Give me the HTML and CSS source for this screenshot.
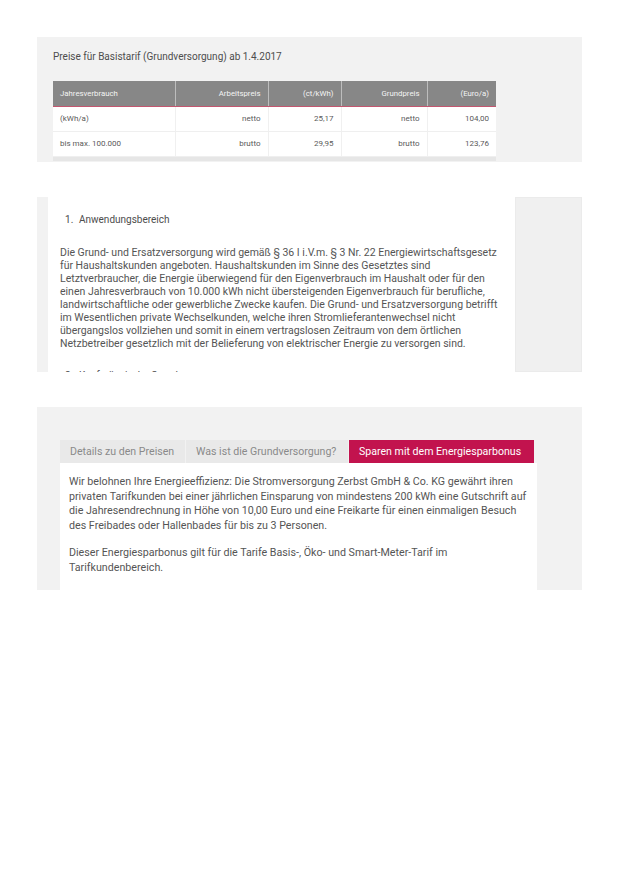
FILE: index.html
```html
<!DOCTYPE html>
<html lang="de">
<head>
<meta charset="utf-8">
<link rel="stylesheet" href="styles.css">
</head>
<body>
<div class="page">
  <section class="panel prices">
    <h2 class="title">Preise für Basistarif (Grundversorgung) ab 1.4.2017</h2>
    <div class="table-wrap">
      <table class="ptable">
        <colgroup>
          <col class="c1"><col class="c2"><col class="c3"><col class="c4"><col class="c5">
        </colgroup>
        <thead>
          <tr><th class="left">Jahresverbrauch</th><th>Arbeitspreis</th><th>(ct/kWh)</th><th>Grundpreis</th><th>(Euro/a)</th></tr>
        </thead>
        <tbody>
          <tr><td class="left">(kWh/a)</td><td>netto</td><td>25,17</td><td>netto</td><td>104,00</td></tr>
          <tr><td class="left">bis max. 100.000</td><td>brutto</td><td>29,95</td><td>brutto</td><td>123,76</td></tr>
        </tbody>
      </table>
    </div>
  </section>

  <section class="panel terms">
    <div class="terms-box">
      <ol class="terms-list">
        <li class="terms-item">
          <h3 class="terms-head">Anwendungsbereich</h3>
          <p class="terms-text">Die Grund- und Ersatzversorgung wird gemäß § 36 I i.V.m. § 3 Nr. 22 Energiewirtschaftsgesetz für Haushaltskunden angeboten. Haushaltskunden im Sinne des Gesetztes sind Letztverbraucher, die Energie überwiegend für den Eigenverbrauch im Haushalt oder für den einen Jahresverbrauch von 10.000 kWh nicht übersteigenden Eigenverbrauch für berufliche, landwirtschaftliche oder gewerbliche Zwecke kaufen. Die Grund- und Ersatzversorgung betrifft im Wesentlichen private Wechselkunden, welche ihren Stromlieferantenwechsel nicht übergangslos vollziehen und somit in einem vertragslosen Zeitraum von dem örtlichen Netzbetreiber gesetzlich mit der Belieferung von elektrischer Energie zu versorgen sind.</p>
        </li>
        <li class="terms-item">
          <h3 class="terms-head">Kaufmännische Grundversorgung</h3>
        </li>
      </ol>
    </div>
    <div class="terms-side"></div>
  </section>

  <section class="panel tabs-panel">
    <div class="tabs">
      <div class="tab">Details zu den Preisen</div>
      <div class="tab">Was ist die Grundversorgung?</div>
      <div class="tab active">Sparen mit dem Energiesparbonus</div>
    </div>
    <div class="tab-body">
      <p class="tab-text">Wir belohnen Ihre Energieeffizienz: Die Stromversorgung Zerbst GmbH &amp; Co. KG gewährt ihren privaten Tarifkunden bei einer jährlichen Einsparung von mindestens 200 kWh eine Gutschrift auf die Jahresendrechnung in Höhe von 10,00 Euro und eine Freikarte für einen einmaligen Besuch des Freibades oder Hallenbades für bis zu 3 Personen.</p>
      <p class="tab-text">Dieser Energiesparbonus gilt für die Tarife Basis-, Öko- und Smart-Meter-Tarif im Tarifkundenbereich.</p>
    </div>
  </section>
</div>
</body>
</html>
```

FILE: styles.css
```css
* { box-sizing: border-box; }
html, body { margin: 0; padding: 0; background: #ffffff; }
body {
  font-family: Roboto, "Liberation Sans", sans-serif;
  color: #555555;
}
.page {
  padding: 37px 0 0 37px;
  width: 620px;
  display: flex;
  flex-direction: column;
  gap: 35px;
}
.panel {
  width: 545px;
  background: #f2f2f2;
}

/* prices */
.prices {
  height: 125px;
  padding: 13px 0 0 16px;
}
.title {
  margin: 0 0 17px 0;
  font-weight: 400;
  font-size: 10px;
  line-height: 14px;
  color: #4d4d4d;
}
.table-wrap {
  width: 443px;
  border-bottom: 4px solid #e6e6e6;
}
.ptable {
  width: 443px;
  border-collapse: collapse;
  table-layout: fixed;
  font-size: 7.8px;
}
.c1 { width: 122px; }
.c2 { width: 93px; }
.c3 { width: 73px; }
.c4 { width: 86px; }
.c5 { width: 69px; }
.ptable th {
  height: 25px;
  background: #878787;
  color: #f4f4f4;
  font-weight: 400;
  text-align: right;
  padding: 0 7px;
  border-left: 1px solid #bdbdbd;
  border-bottom: 1px solid #c3566f;
}
.ptable th:first-child { border-left: 0; }
.ptable td {
  height: 25px;
  background: #ffffff;
  text-align: right;
  padding: 0 7px;
  color: #5a5a5a;
  border-left: 1px solid #f0f0f0;
  border-bottom: 1px solid #efefef;
  font-size: 8px;
}
.ptable td:first-child { border-left: 0; }
.ptable .left { text-align: left; }

/* terms */
.terms {
  height: 175px;
  display: flex;
  padding-left: 11px;
}
.terms-box {
  width: 467px;
  height: 175px;
  background: #ffffff;
  overflow: hidden;
  padding: 16px 12px 0 12px;
}
.terms-side {
  margin-left: auto;
  width: 67px;
  background: #f0f0f0;
  border: 1px solid #ebebeb;
}
.terms-list {
  margin: 0;
  padding: 0;
  list-style: none;
  counter-reset: item;
}
.terms-item { counter-increment: item; }
.terms-head {
  margin: 0 0 19px 0;
  padding-left: 5px;
  font-weight: 400;
  font-size: 10px;
  line-height: 14px;
  color: #4d4d4d;
}
.terms-head::before {
  content: counter(item) ".";
  display: inline-block;
  width: 14px;
}
.terms-text {
  margin: 0 0 19px 0;
  font-size: 10.5px;
  line-height: 13px;
  color: #555555;
}

/* tabs */
.tabs-panel {
  height: 183px;
  padding: 33px 0 0 23px;
  overflow: hidden;
}
.tabs {
  display: flex;
  height: 23px;
}
.tab {
  height: 23px;
  line-height: 23px;
  padding: 0 10px;
  font-size: 10.6px;
  color: #8a8a8a;
  background: #e9e9e9;
  white-space: nowrap;
}
.tab + .tab { border-left: 1px solid #f2f2f2; }
.tab.active {
  background: #c2134e;
  color: #ffffff;
}
.tab:nth-child(1) { width: 125px; }
.tab:nth-child(2) { width: 163px; }
.tab:nth-child(3) { width: 186px; }
.tab-body {
  width: 477px;
  background: #ffffff;
  padding: 12px 9px 20px 9px;
  height: 127px;
}
.tab-text {
  margin: 0 0 13px 0;
  font-size: 10.7px;
  line-height: 14.5px;
  color: #555555;
}
```
